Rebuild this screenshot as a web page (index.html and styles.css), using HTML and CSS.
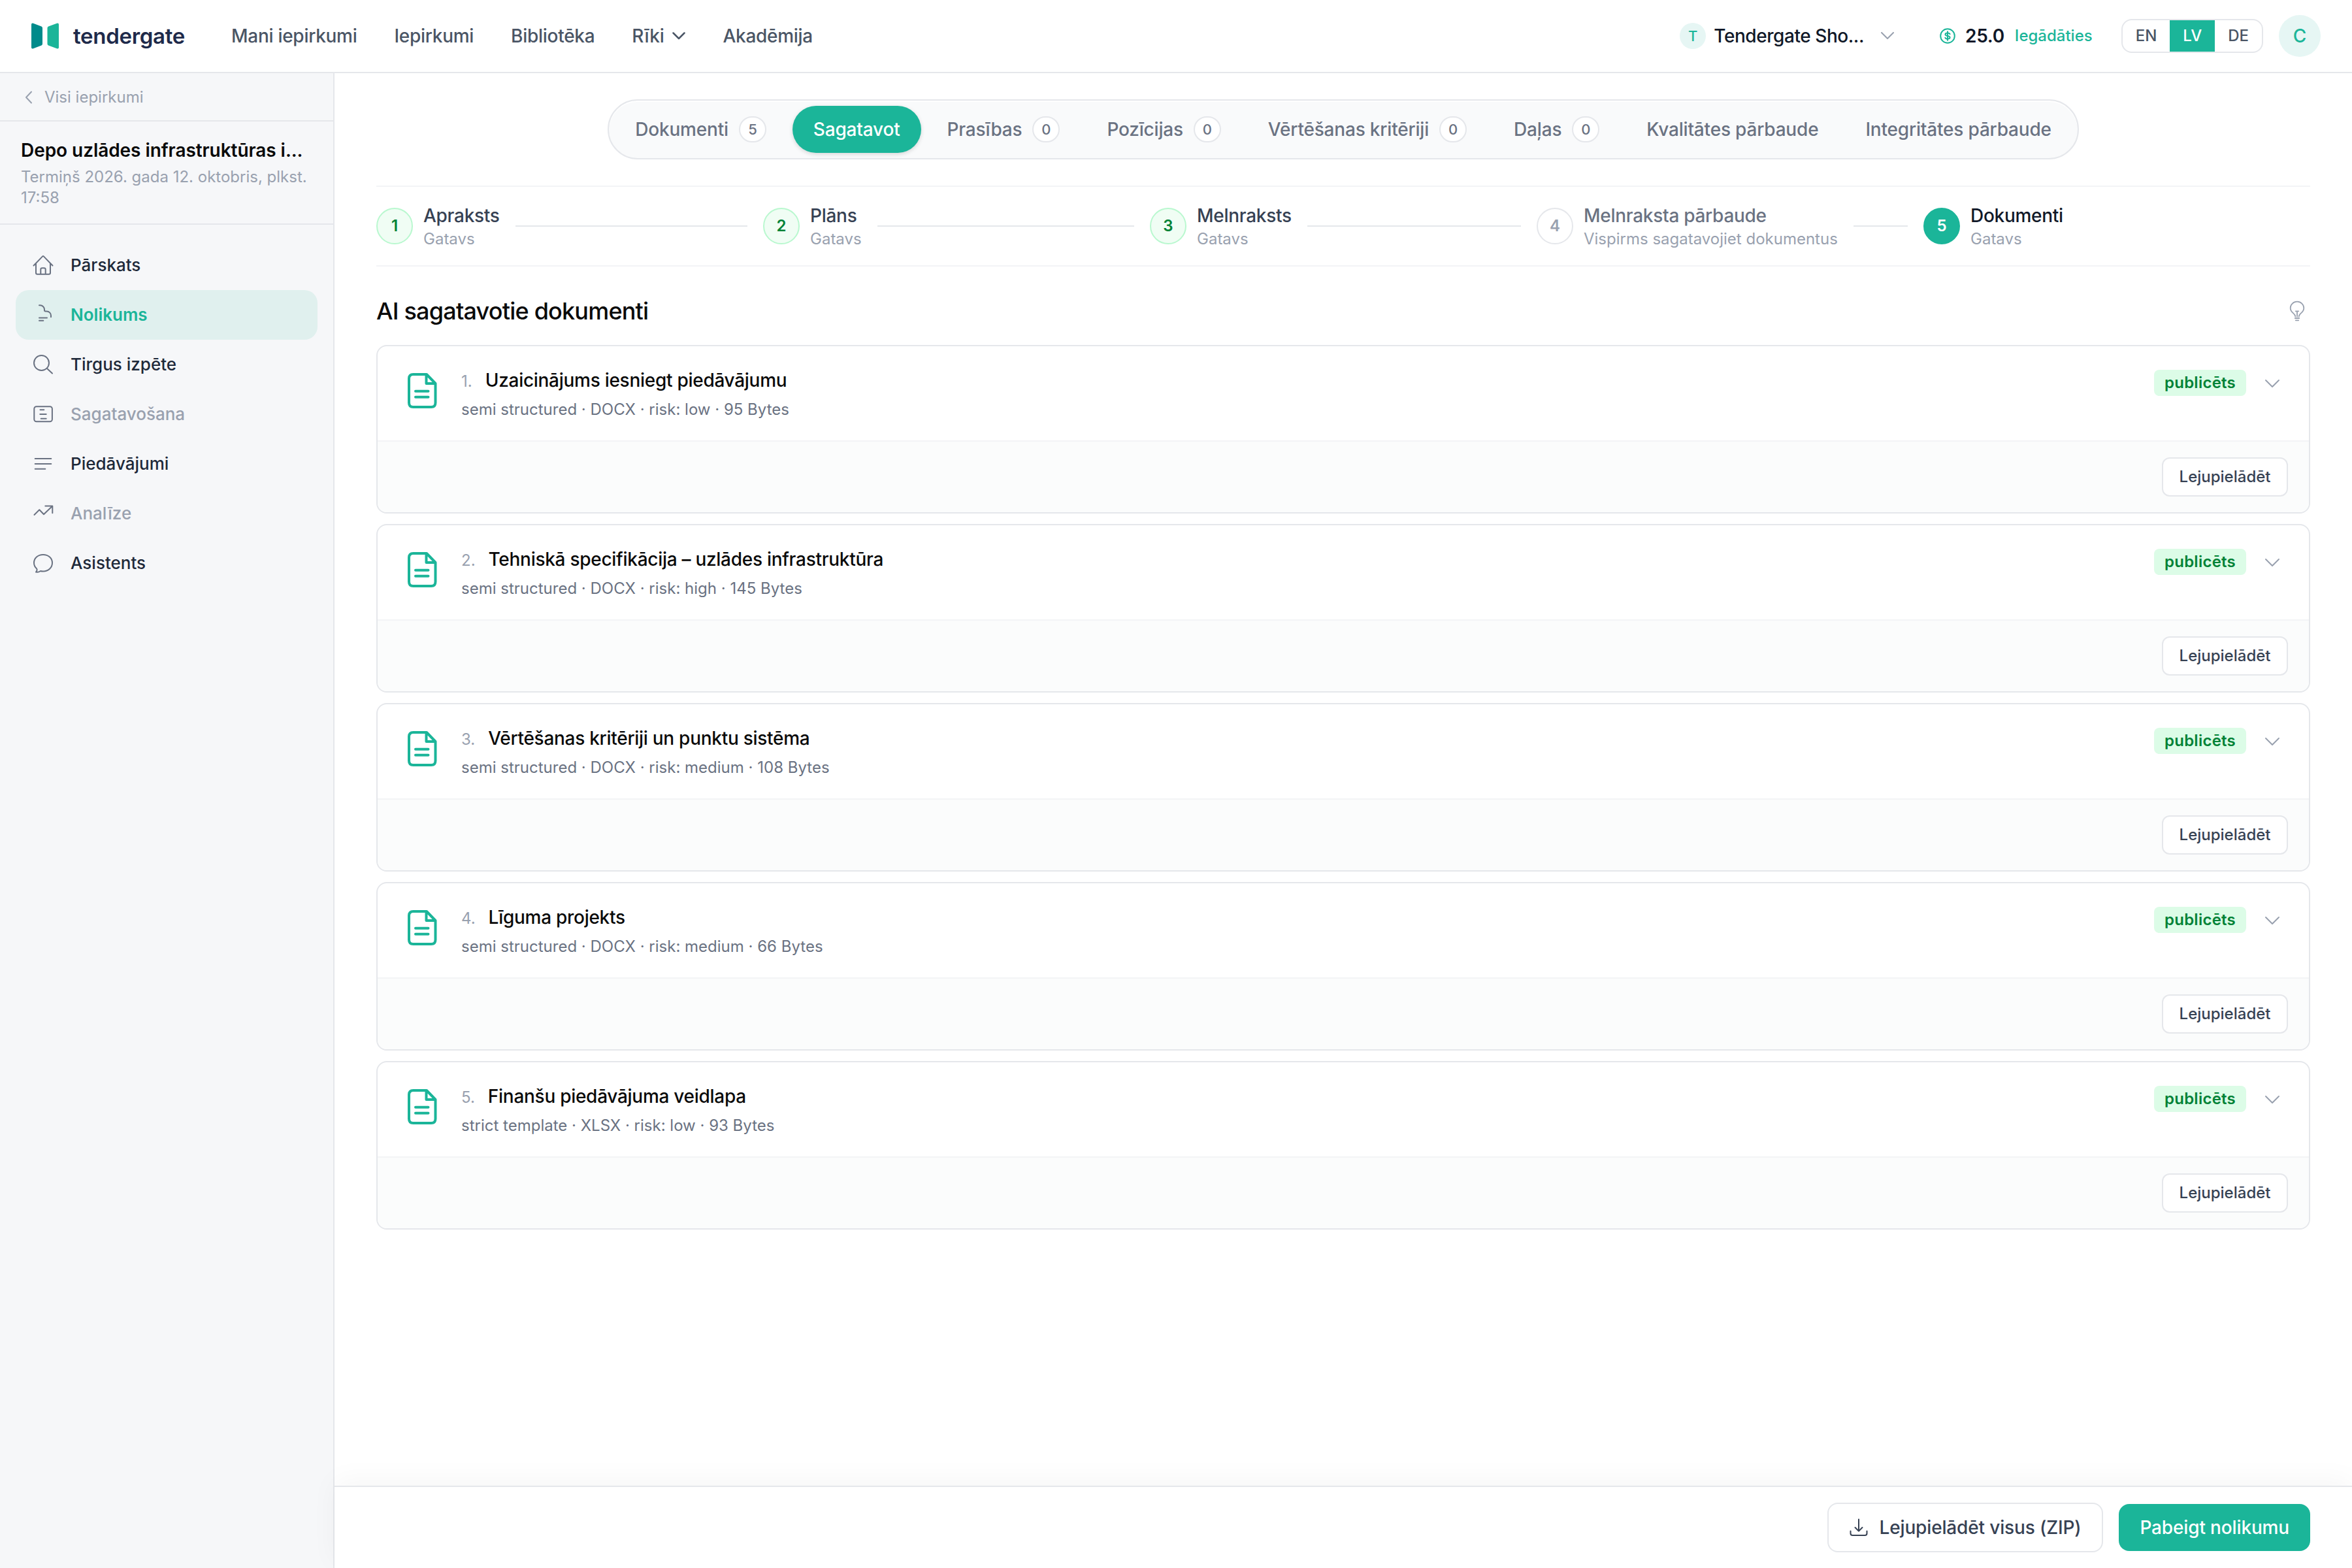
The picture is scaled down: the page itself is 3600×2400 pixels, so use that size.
FILE: index.html
```html
<!DOCTYPE html>
<html lang="lv">
  <head>
    <meta charset="UTF-8">
    <meta name="viewport" content="width=device-width, initial-scale=1.0">
    <title>Tendergate</title>
    <link rel="stylesheet" href="styles.css">
  </head>
  <body>
    <header class="topbar">
      <div class="logo">
        <svg class="logo-mark" viewBox="0 0 42 40"><path fill="#008b8b" d="M0 2.5Q0 .2 2.4 .6L15.500 5.600Q17 6.200 17 8V32Q17 33.800 15.500 34.400L2.400 39.400Q0 39.800 0 37.500Z"/><path fill="#1bb599" d="M42 2.500Q42 .2 39.600 .6L26 5.600Q24.500 6.200 24.500 8V32Q24.500 33.800 26 34.400L39.600 39.400Q42 39.800 42 37.500Z"/></svg>
        <span class="logo-text">tendergate</span>
      </div>
      <nav class="main-nav">
        <a>Mani iepirkumi</a>
        <a>Iepirkumi</a>
        <a>Bibliotēka</a>
        <a>Rīki <svg class="nav-chevron" viewBox="0 0 20 12"><path d="M1.500 1.500L10 10L18.500 1.500"/></svg></a>
        <a>Akadēmija</a>
      </nav>
      <div class="top-right">
        <span class="org-letter">T</span>
        <span class="org-name">Tendergate Sho...</span>
        <svg class="org-chevron" viewBox="0 0 20 12"><path d="M1 1L10 10L19 1"/></svg>
        <svg class="coin" viewBox="0 0 24 24"><circle cx="12" cy="12" r="10.8"/><path d="M15.600 9.200C15 7.900 13.700 7.400 12 7.400C10 7.400 8.500 8.200 8.500 9.700C8.500 13 15.600 11 15.600 14.300C15.600 15.800 14 16.600 12 16.600C10.200 16.600 8.800 16 8.300 14.700M12 5.200V18.800"/></svg>
        <span class="balance">25.0</span>
        <a class="buy">Iegādāties</a>
        <div class="langs">
          <span class="lang">EN</span>
          <span class="lang lang-active">LV</span>
          <span class="lang">DE</span>
        </div>
        <span class="avatar">C</span>
      </div>
    </header>

    <div class="layout">
      <aside class="sidebar">
        <a class="back"><svg class="back-chevron" viewBox="0 0 12 20"><path d="M10 1.500L2 10L10 18.500"/></svg><span>Visi iepirkumi</span></a>
        <div class="tender">
          <div class="tender-title">Depo uzlādes infrastruktūras i...</div>
          <div class="tender-due">Termiņš 2026. gada 12. oktobris, plkst. 17:58</div>
        </div>
        <nav class="side-nav">
          <a class="side-item">
            <svg class="side-icon" viewBox="0 0 36 36"><path d="M3.500 18.500L16.900 4.600Q18 3.500 19.100 4.600L32.500 18.500M7 15V29.500Q7 31.700 9.200 31.700H26.800Q29 31.700 29 29.500V15M14.300 31.500V24.500Q14.300 22.300 16.500 22.300H19.500Q21.700 22.300 21.700 24.500V31.500"/></svg>
            <span>Pārskats</span>
          </a>
          <a class="side-item side-active">
            <svg class="side-icon" viewBox="0 0 36 36"><path d="M12 3.300H13.500A6.500 6.500 0 0 1 20 9.800V10.800Q20 12.500 21.700 12.500H23.500A6.500 6.500 0 0 1 30 19V21.300M12 22.500H24M12 26.700H18.300"/></svg>
            <span>Nolikums</span>
          </a>
          <a class="side-item">
            <svg class="side-icon" viewBox="0 0 36 36"><circle cx="15.500" cy="15.500" r="11.500"/><path d="M24 24L32 31.500"/></svg>
            <span>Tirgus izpēte</span>
          </a>
          <a class="side-item side-off">
            <svg class="side-icon" viewBox="0 0 36 36"><rect x="4.300" y="6.300" width="27.600" height="23" rx="3.500"/><path d="M13.500 11.300H19.300M13.300 18H22.700M14.700 24.800H22.700"/></svg>
            <span>Sagatavošana</span>
          </a>
          <a class="side-item">
            <svg class="side-icon" viewBox="0 0 36 36"><path d="M5.700 10H30.300M5.700 18H30.300M5.700 25.800H21.300"/></svg>
            <span>Piedāvājumi</span>
          </a>
          <a class="side-item side-off">
            <svg class="side-icon" viewBox="0 0 36 36"><path d="M4.500 20L12.300 12.300L19 19.300L32 6.700M21.300 6.600H32.300V17.300"/></svg>
            <span>Analīze</span>
          </a>
          <a class="side-item">
            <svg class="side-icon" viewBox="0 0 36 36"><path d="M18 30.500C26 30.500 32 25 32 17.500C32 10.300 26 5 18 5C10 5 4 10.300 4 17.500C4 21.300 5.600 24 8 26.300C8.600 27 8.800 27.600 8.600 28.400C8.300 29.600 7.700 30.700 7 31.600C9.600 32 12.100 31.400 14 30Q16 30.500 18 30.500Z"/></svg>
            <span>Asistents</span>
          </a>
        </nav>
      </aside>

      <main class="content">
        <div class="tabs">
          <a class="tab">Dokumenti <span class="count">5</span></a>
          <a class="tab tab-active">Sagatavot</a>
          <a class="tab">Prasības <span class="count">0</span></a>
          <a class="tab">Pozīcijas <span class="count">0</span></a>
          <a class="tab">Vērtēšanas kritēriji <span class="count">0</span></a>
          <a class="tab">Daļas <span class="count">0</span></a>
          <a class="tab">Kvalitātes pārbaude</a>
          <a class="tab">Integritātes pārbaude</a>
        </div>

        <div class="steps">
          <div class="step step-done">
            <span class="step-num">1</span>
            <div class="step-text"><div class="step-title">Apraksts</div><div class="step-sub">Gatavs</div></div>
            <span class="step-line"></span>
          </div>
          <div class="step step-done">
            <span class="step-num">2</span>
            <div class="step-text"><div class="step-title">Plāns</div><div class="step-sub">Gatavs</div></div>
            <span class="step-line"></span>
          </div>
          <div class="step step-done">
            <span class="step-num">3</span>
            <div class="step-text"><div class="step-title">Melnraksts</div><div class="step-sub">Gatavs</div></div>
            <span class="step-line"></span>
          </div>
          <div class="step">
            <span class="step-num">4</span>
            <div class="step-text"><div class="step-title">Melnraksta pārbaude</div><div class="step-sub">Vispirms sagatavojiet dokumentus</div></div>
            <span class="step-line"></span>
          </div>
          <div class="step step-current">
            <span class="step-num">5</span>
            <div class="step-text"><div class="step-title">Dokumenti</div><div class="step-sub">Gatavs</div></div>
          </div>
        </div>

        <div class="heading">
          <h1>AI sagatavotie dokumenti</h1>
          <svg class="bulb" viewBox="0 0 24 32"><path d="M9.300 24.500C9.300 19.500 1.700 19 1.700 11.500C1.700 6 6.300 1.700 12 1.700C17.700 1.700 22.300 6 22.300 11.500C22.300 19 14.700 19.500 14.700 24.500M12 16.500V24.500M9.800 16.300H14.200M8.800 27H15.200M9.800 30.300H14.200"/></svg>
        </div>

        <div class="docs">
          <article class="doc">
            <div class="doc-main">
              <svg class="doc-icon" viewBox="0 0 56 56"><path d="M14.500 3H35L48.500 17V46.500Q48.500 53 42 53H14.500Q8 53 8 46.500V9.500Q8 3 14.500 3ZM34.500 3V17H48.500M18 28.700H37.500M18 37.700H37.500"/></svg>
              <div class="doc-text">
                <div class="doc-title"><span class="doc-num">1.</span>Uzaicinājums iesniegt piedāvājumu</div>
                <div class="doc-meta">semi structured · DOCX · risk: low · 95 Bytes</div>
              </div>
              <span class="badge">publicēts</span>
              <svg class="doc-chevron" viewBox="0 0 24 14"><path d="M2 2L12 12L22 2"/></svg>
            </div>
            <div class="doc-foot"><button class="btn-small">Lejupielādēt</button></div>
          </article>
          <article class="doc">
            <div class="doc-main">
              <svg class="doc-icon" viewBox="0 0 56 56"><path d="M14.500 3H35L48.500 17V46.500Q48.500 53 42 53H14.500Q8 53 8 46.500V9.500Q8 3 14.500 3ZM34.500 3V17H48.500M18 28.700H37.500M18 37.700H37.500"/></svg>
              <div class="doc-text">
                <div class="doc-title"><span class="doc-num">2.</span>Tehniskā specifikācija – uzlādes infrastruktūra</div>
                <div class="doc-meta">semi structured · DOCX · risk: high · 145 Bytes</div>
              </div>
              <span class="badge">publicēts</span>
              <svg class="doc-chevron" viewBox="0 0 24 14"><path d="M2 2L12 12L22 2"/></svg>
            </div>
            <div class="doc-foot"><button class="btn-small">Lejupielādēt</button></div>
          </article>
          <article class="doc">
            <div class="doc-main">
              <svg class="doc-icon" viewBox="0 0 56 56"><path d="M14.500 3H35L48.500 17V46.500Q48.500 53 42 53H14.500Q8 53 8 46.500V9.500Q8 3 14.500 3ZM34.500 3V17H48.500M18 28.700H37.500M18 37.700H37.500"/></svg>
              <div class="doc-text">
                <div class="doc-title"><span class="doc-num">3.</span>Vērtēšanas kritēriji un punktu sistēma</div>
                <div class="doc-meta">semi structured · DOCX · risk: medium · 108 Bytes</div>
              </div>
              <span class="badge">publicēts</span>
              <svg class="doc-chevron" viewBox="0 0 24 14"><path d="M2 2L12 12L22 2"/></svg>
            </div>
            <div class="doc-foot"><button class="btn-small">Lejupielādēt</button></div>
          </article>
          <article class="doc">
            <div class="doc-main">
              <svg class="doc-icon" viewBox="0 0 56 56"><path d="M14.500 3H35L48.500 17V46.500Q48.500 53 42 53H14.500Q8 53 8 46.500V9.500Q8 3 14.500 3ZM34.500 3V17H48.500M18 28.700H37.500M18 37.700H37.500"/></svg>
              <div class="doc-text">
                <div class="doc-title"><span class="doc-num">4.</span>Līguma projekts</div>
                <div class="doc-meta">semi structured · DOCX · risk: medium · 66 Bytes</div>
              </div>
              <span class="badge">publicēts</span>
              <svg class="doc-chevron" viewBox="0 0 24 14"><path d="M2 2L12 12L22 2"/></svg>
            </div>
            <div class="doc-foot"><button class="btn-small">Lejupielādēt</button></div>
          </article>
          <article class="doc">
            <div class="doc-main">
              <svg class="doc-icon" viewBox="0 0 56 56"><path d="M14.500 3H35L48.500 17V46.500Q48.500 53 42 53H14.500Q8 53 8 46.500V9.500Q8 3 14.500 3ZM34.500 3V17H48.500M18 28.700H37.500M18 37.700H37.500"/></svg>
              <div class="doc-text">
                <div class="doc-title"><span class="doc-num">5.</span>Finanšu piedāvājuma veidlapa</div>
                <div class="doc-meta">strict template · XLSX · risk: low · 93 Bytes</div>
              </div>
              <span class="badge">publicēts</span>
              <svg class="doc-chevron" viewBox="0 0 24 14"><path d="M2 2L12 12L22 2"/></svg>
            </div>
            <div class="doc-foot"><button class="btn-small">Lejupielādēt</button></div>
          </article>
        </div>

        <footer class="actions">
          <button class="btn btn-outline"><svg class="dl-icon" viewBox="0 0 28 28"><path d="M14 1.500V19M8.500 14L14 19.500L19.500 14M1.500 19.500V23Q1.500 26 4.500 26H23.500Q26.500 26 26.500 23V19.500"/></svg>Lejupielādēt visus (ZIP)</button>
          <button class="btn btn-primary">Pabeigt nolikumu</button>
        </footer>
      </main>
    </div>
  </body>
</html>
```
FILE: styles.css
```css
* {
  box-sizing: border-box;
}

body {
  margin: 0;
  height: 2400px;
  display: flex;
  flex-direction: column;
  background: #fff;
  color: #0a0a0a;
  font-family: Inter, "Noto Sans", sans-serif;
  font-size: 28px;
  font-weight: 500;
  line-height: 40px;
}

svg {
  display: block;
  flex: none;
  fill: none;
  stroke-width: 2;
  stroke-linecap: round;
  stroke-linejoin: round;
}

button {
  font: inherit;
}

/* Top bar */
.topbar {
  display: flex;
  align-items: center;
  flex: none;
  height: 112px;
  padding: 0 48px;
  border-bottom: 2px solid #e5e7eb;
}

.logo {
  display: flex;
  align-items: center;
  gap: 22px;
  width: 306px;
}

.logo-mark {
  width: 42px;
  height: 40px;
}

.logo-text {
  color: #1e2a4a;
  font-size: 33px;
  font-weight: 600;
  letter-spacing: -0.3px;
}

.main-nav {
  display: flex;
  gap: 57px;
  color: #4a5565;
  letter-spacing: -0.01em;
}

.main-nav a {
  display: flex;
  align-items: center;
  gap: 13px;
}

.nav-chevron {
  width: 20px;
  height: 12px;
  stroke: #4a5565;
  stroke-width: 2.5;
}

.top-right {
  display: flex;
  align-items: center;
  margin-left: auto;
}

.org-letter {
  width: 40px;
  height: 40px;
  margin-right: 12px;
  border-radius: 50%;
  background: #e6f6f4;
  color: #1bb599;
  font-size: 22px;
  text-align: center;
}

.org-name {
  color: #101828;
  letter-spacing: -0.44px;
}

.org-chevron {
  width: 20px;
  height: 12px;
  margin: 0 70px 0 26px;
  stroke: #99a1af;
}

.coin {
  width: 24px;
  height: 24px;
  margin-right: 15px;
  stroke: #1bb599;
}

.balance {
  margin-right: 16px;
  color: #101828;
  font-weight: 600;
  letter-spacing: -0.01em;
}

.buy {
  margin-right: 44px;
  color: #1bb599;
  font-size: 24px;
}

.langs {
  display: flex;
  height: 52px;
  margin-right: 24px;
  border: 2px solid #e5e7eb;
  border-radius: 16px;
  overflow: hidden;
}

.lang {
  padding: 0 20px;
  color: #4a5565;
  font-size: 24px;
  line-height: 48px;
}

.lang-active {
  background: #1bb599;
  color: #fff;
}

.avatar {
  width: 64px;
  height: 64px;
  border-radius: 50%;
  background: #e6f6f4;
  color: #1bb599;
  line-height: 64px;
  text-align: center;
}

/* Sidebar */
.layout {
  display: flex;
  flex: 1;
}

.sidebar {
  flex: none;
  width: 512px;
  border-right: 2px solid #e5e7eb;
  background: #f6f7f9;
}

.back {
  display: flex;
  align-items: center;
  gap: 18px;
  height: 74px;
  padding: 2px 0 0 38px;
  border-bottom: 2px solid #e5e7eb;
  color: #99a1af;
  font-size: 24px;
  font-weight: 400;
}

.back-chevron {
  width: 12px;
  height: 20px;
  stroke: #99a1af;
}

.tender {
  height: 158px;
  padding: 24px 24px 0 32px;
  border-bottom: 2px solid #e5e7eb;
}

.tender-title {
  font-weight: 600;
  letter-spacing: -0.06px;
  white-space: nowrap;
}

.tender-due {
  margin-top: 5px;
  color: #99a1af;
  font-size: 24px;
  font-weight: 400;
  line-height: 32px;
}

.side-nav {
  padding: 24px;
}

.side-item {
  display: flex;
  align-items: center;
  gap: 24px;
  height: 76px;
  padding-left: 24px;
  border-radius: 20px;
  color: #1e2939;
  font-size: 26px;
}

.side-icon {
  width: 36px;
  height: 36px;
  stroke: #6a7282;
}

.side-active {
  background: #e0f0ee;
  color: #1bb599;
  font-weight: 600;
}

.side-off {
  color: #99a1af;
}

/* Content */
.content {
  display: flex;
  flex-direction: column;
  flex: 1;
  padding-top: 40px;
}

.tabs {
  display: flex;
  gap: 8px;
  align-self: center;
  height: 92px;
  padding: 8px;
  border: 2px solid #e5e7eb;
  border-radius: 46px;
  background: #f9fafb;
  box-shadow: inset 0 2px 0 #fff;
  letter-spacing: -0.19px;
}

.tab {
  display: flex;
  align-items: center;
  gap: 16px;
  padding: 0 32px;
  border-radius: 36px;
  color: #6a7282;
}

.tab-active {
  background: #1bb599;
  color: #fff;
  box-shadow: 0 2px 6px rgba(0, 0, 0, 0.15);
}

.count {
  width: 42px;
  height: 40px;
  border: 2px solid #e5e7eb;
  border-radius: 20px;
  background: #fff;
  font-size: 22px;
  line-height: 36px;
  text-align: center;
}

.steps {
  display: flex;
  height: 124px;
  margin: 40px 64px 0;
  border-top: 2px solid #f3f4f6;
  border-bottom: 2px solid #f3f4f6;
}

.step {
  display: flex;
  align-items: center;
  width: 592px;
}

.step-num {
  width: 56px;
  height: 56px;
  margin-right: 16px;
  border: 2px solid #e5e7eb;
  border-radius: 50%;
  color: #99a1af;
  font-size: 24px;
  font-weight: 600;
  line-height: 52px;
  text-align: center;
}

.step-text {
  padding-top: 4px;
}

.step-title {
  color: #6a7282;
  line-height: 36px;
  letter-spacing: -0.01em;
}

.step-sub {
  color: #99a1af;
  font-size: 24px;
  font-weight: 400;
  line-height: 36px;
}

.step-line {
  flex: 1;
  height: 2px;
  margin: 0 24px;
  background: #e5e7eb;
}

.step-done .step-num {
  border-color: #b9f8cf;
  background: #f0fdf4;
  color: #008236;
}

.step-done .step-title {
  color: #364153;
}

.step-current .step-num {
  border-color: #1bb599;
  background: #1bb599;
  color: #fff;
}

.step-current .step-title {
  color: #101828;
}

.heading {
  display: flex;
  align-items: center;
  justify-content: space-between;
  height: 72px;
  margin: 32px 64px 16px;
  padding-right: 8px;
}

.heading h1 {
  margin: 0;
  font-size: 36px;
  font-weight: 500;
  letter-spacing: -0.8px;
}

.bulb {
  width: 24px;
  height: 32px;
  stroke: #99a1af;
  stroke-width: 1.8;
}

.docs {
  display: flex;
  flex-direction: column;
  gap: 16px;
  margin: 0 64px;
}

.doc {
  height: 258px;
  border: 2px solid #e5e7eb;
  border-radius: 16px;
  overflow: hidden;
}

.doc-main {
  display: flex;
  align-items: flex-start;
  height: 144px;
  padding: 32px 44px 0 40px;
}

.doc-icon {
  width: 56px;
  height: 56px;
  margin: 8px 32px 0 0;
  stroke: #1bb599;
  stroke-width: 4;
}

.doc-text {
  flex: 1;
}

.doc-title {
  letter-spacing: -0.01em;
}

.doc-num {
  margin-right: 20px;
  color: #99a1af;
  font-size: 24px;
  font-weight: 400;
  letter-spacing: 0;
}

.doc-meta {
  margin-top: 3px;
  color: #6a7282;
  font-size: 24px;
  font-weight: 400;
}

.badge {
  margin: 4px 28px 0 0;
  padding: 0 16px;
  border-radius: 8px;
  background: #dcfce7;
  color: #008236;
  font-size: 24px;
  font-weight: 600;
  letter-spacing: 0.01em;
}

.doc-chevron {
  width: 24px;
  height: 14px;
  margin-top: 18px;
  stroke: #99a1af;
}

.doc-foot {
  display: flex;
  justify-content: flex-end;
  height: 110px;
  padding: 24px 32px;
  border-top: 2px solid #f3f4f6;
  background: #fbfcfc;
}

.btn-small {
  height: 60px;
  padding: 0 24.5px;
  border: 2px solid #e5e7eb;
  border-radius: 12px;
  background: #fff;
  color: #364153;
  font-size: 24px;
}

/* Bottom actions */
.actions {
  display: flex;
  align-items: center;
  justify-content: flex-end;
  gap: 24px;
  height: 126px;
  margin-top: auto;
  padding: 0 64px;
  border-top: 2px solid #e5e7eb;
  background: #fff;
  box-shadow: 0 -8px 40px rgba(0, 0, 0, 0.04);
}

.btn {
  display: flex;
  align-items: center;
  gap: 18px;
  height: 72px;
  padding: 0 32px;
  border: none;
  border-radius: 16px;
  letter-spacing: -0.15px;
}

.btn-outline {
  height: 76px;
  border: 2px solid #e5e7eb;
  background: #fff;
  color: #364153;
}

.btn-primary {
  background: #1bb599;
  color: #fff;
}

.dl-icon {
  width: 28px;
  height: 28px;
  stroke: #364153;
}
```
